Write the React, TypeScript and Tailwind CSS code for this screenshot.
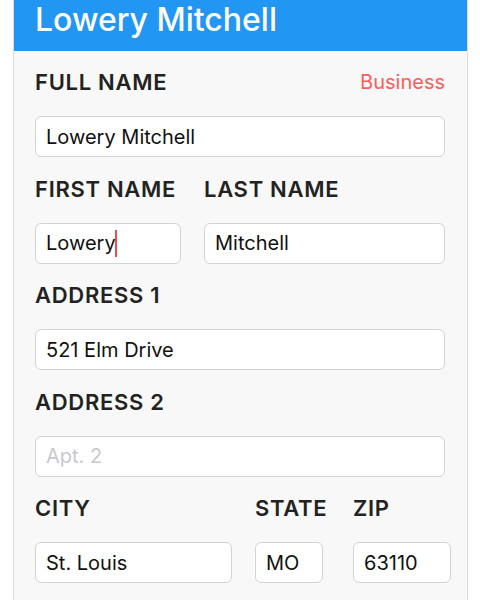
const font = { fontFamily: "Inter, 'Noto Sans', sans-serif" };

function Label({ children }: { children: React.ReactNode }) {
  return <div className="text-[22px] leading-[26px] font-semibold text-[#222] tracking-[0.7px]">{children}</div>;
}

function Field({ value, placeholder, cursor }: { value?: string; placeholder?: string; cursor?: boolean }) {
  return (
    <div className="h-[41px] rounded-[6px] border border-[#d3d3d3] bg-white pl-[10px] flex items-center text-[20px]">
      {value ? (
        <span className="text-[#111]">{value}</span>
      ) : (
        <span className="text-[#c8c8cc]">{placeholder}</span>
      )}
      {cursor && <span className="w-[2px] h-[27px] bg-[#f04b4b] -ml-[1px]" />}
    </div>
  );
}

export default function App() {
  return (
    <div className="w-[480px] h-[600px] bg-white overflow-hidden" style={font}>
      <div className="ml-[13px] w-[455px] h-full border-x border-[#dcdcdc] bg-[#f8f8f8]">
        <div className="h-[51px] bg-[#2196f3] pl-[21px] text-white text-[32px] leading-[40px] font-medium">
          Lowery Mitchell
        </div>
        <div className="pl-[21px] pr-[22px] pt-[18px] flex flex-col gap-[18.5px]">
          <div className="flex flex-col gap-[21px]">
            <div className="flex justify-between items-center">
              <Label>FULL NAME</Label>
              <span className="text-[20px] leading-[26px] text-[#ff5b5b]">Business</span>
            </div>
            <Field value="Lowery Mitchell" />
          </div>
          <div className="flex gap-[23px]">
            <div className="w-[146px] shrink-0 flex flex-col gap-[21px]">
              <Label>FIRST NAME</Label>
              <Field value="Lowery" cursor />
            </div>
            <div className="flex-1 flex flex-col gap-[21px]">
              <Label>LAST NAME</Label>
              <Field value="Mitchell" />
            </div>
          </div>
          <div className="flex flex-col gap-[21px]">
            <Label>ADDRESS 1</Label>
            <Field value="521 Elm Drive" />
          </div>
          <div className="flex flex-col gap-[21px]">
            <Label>ADDRESS 2</Label>
            <Field placeholder="Apt. 2" />
          </div>
          <div className="flex">
            <div className="w-[197px] shrink-0 flex flex-col gap-[21px]">
              <Label>CITY</Label>
              <Field value="St. Louis" />
            </div>
            <div className="ml-[23px] w-[68px] shrink-0 flex flex-col gap-[21px]">
              <Label>STATE</Label>
              <Field value="MO" />
            </div>
            <div className="ml-[30px] w-[98px] shrink-0 flex flex-col gap-[21px]">
              <Label>ZIP</Label>
              <Field value="63110" />
            </div>
          </div>
        </div>
      </div>
    </div>
  );
}
